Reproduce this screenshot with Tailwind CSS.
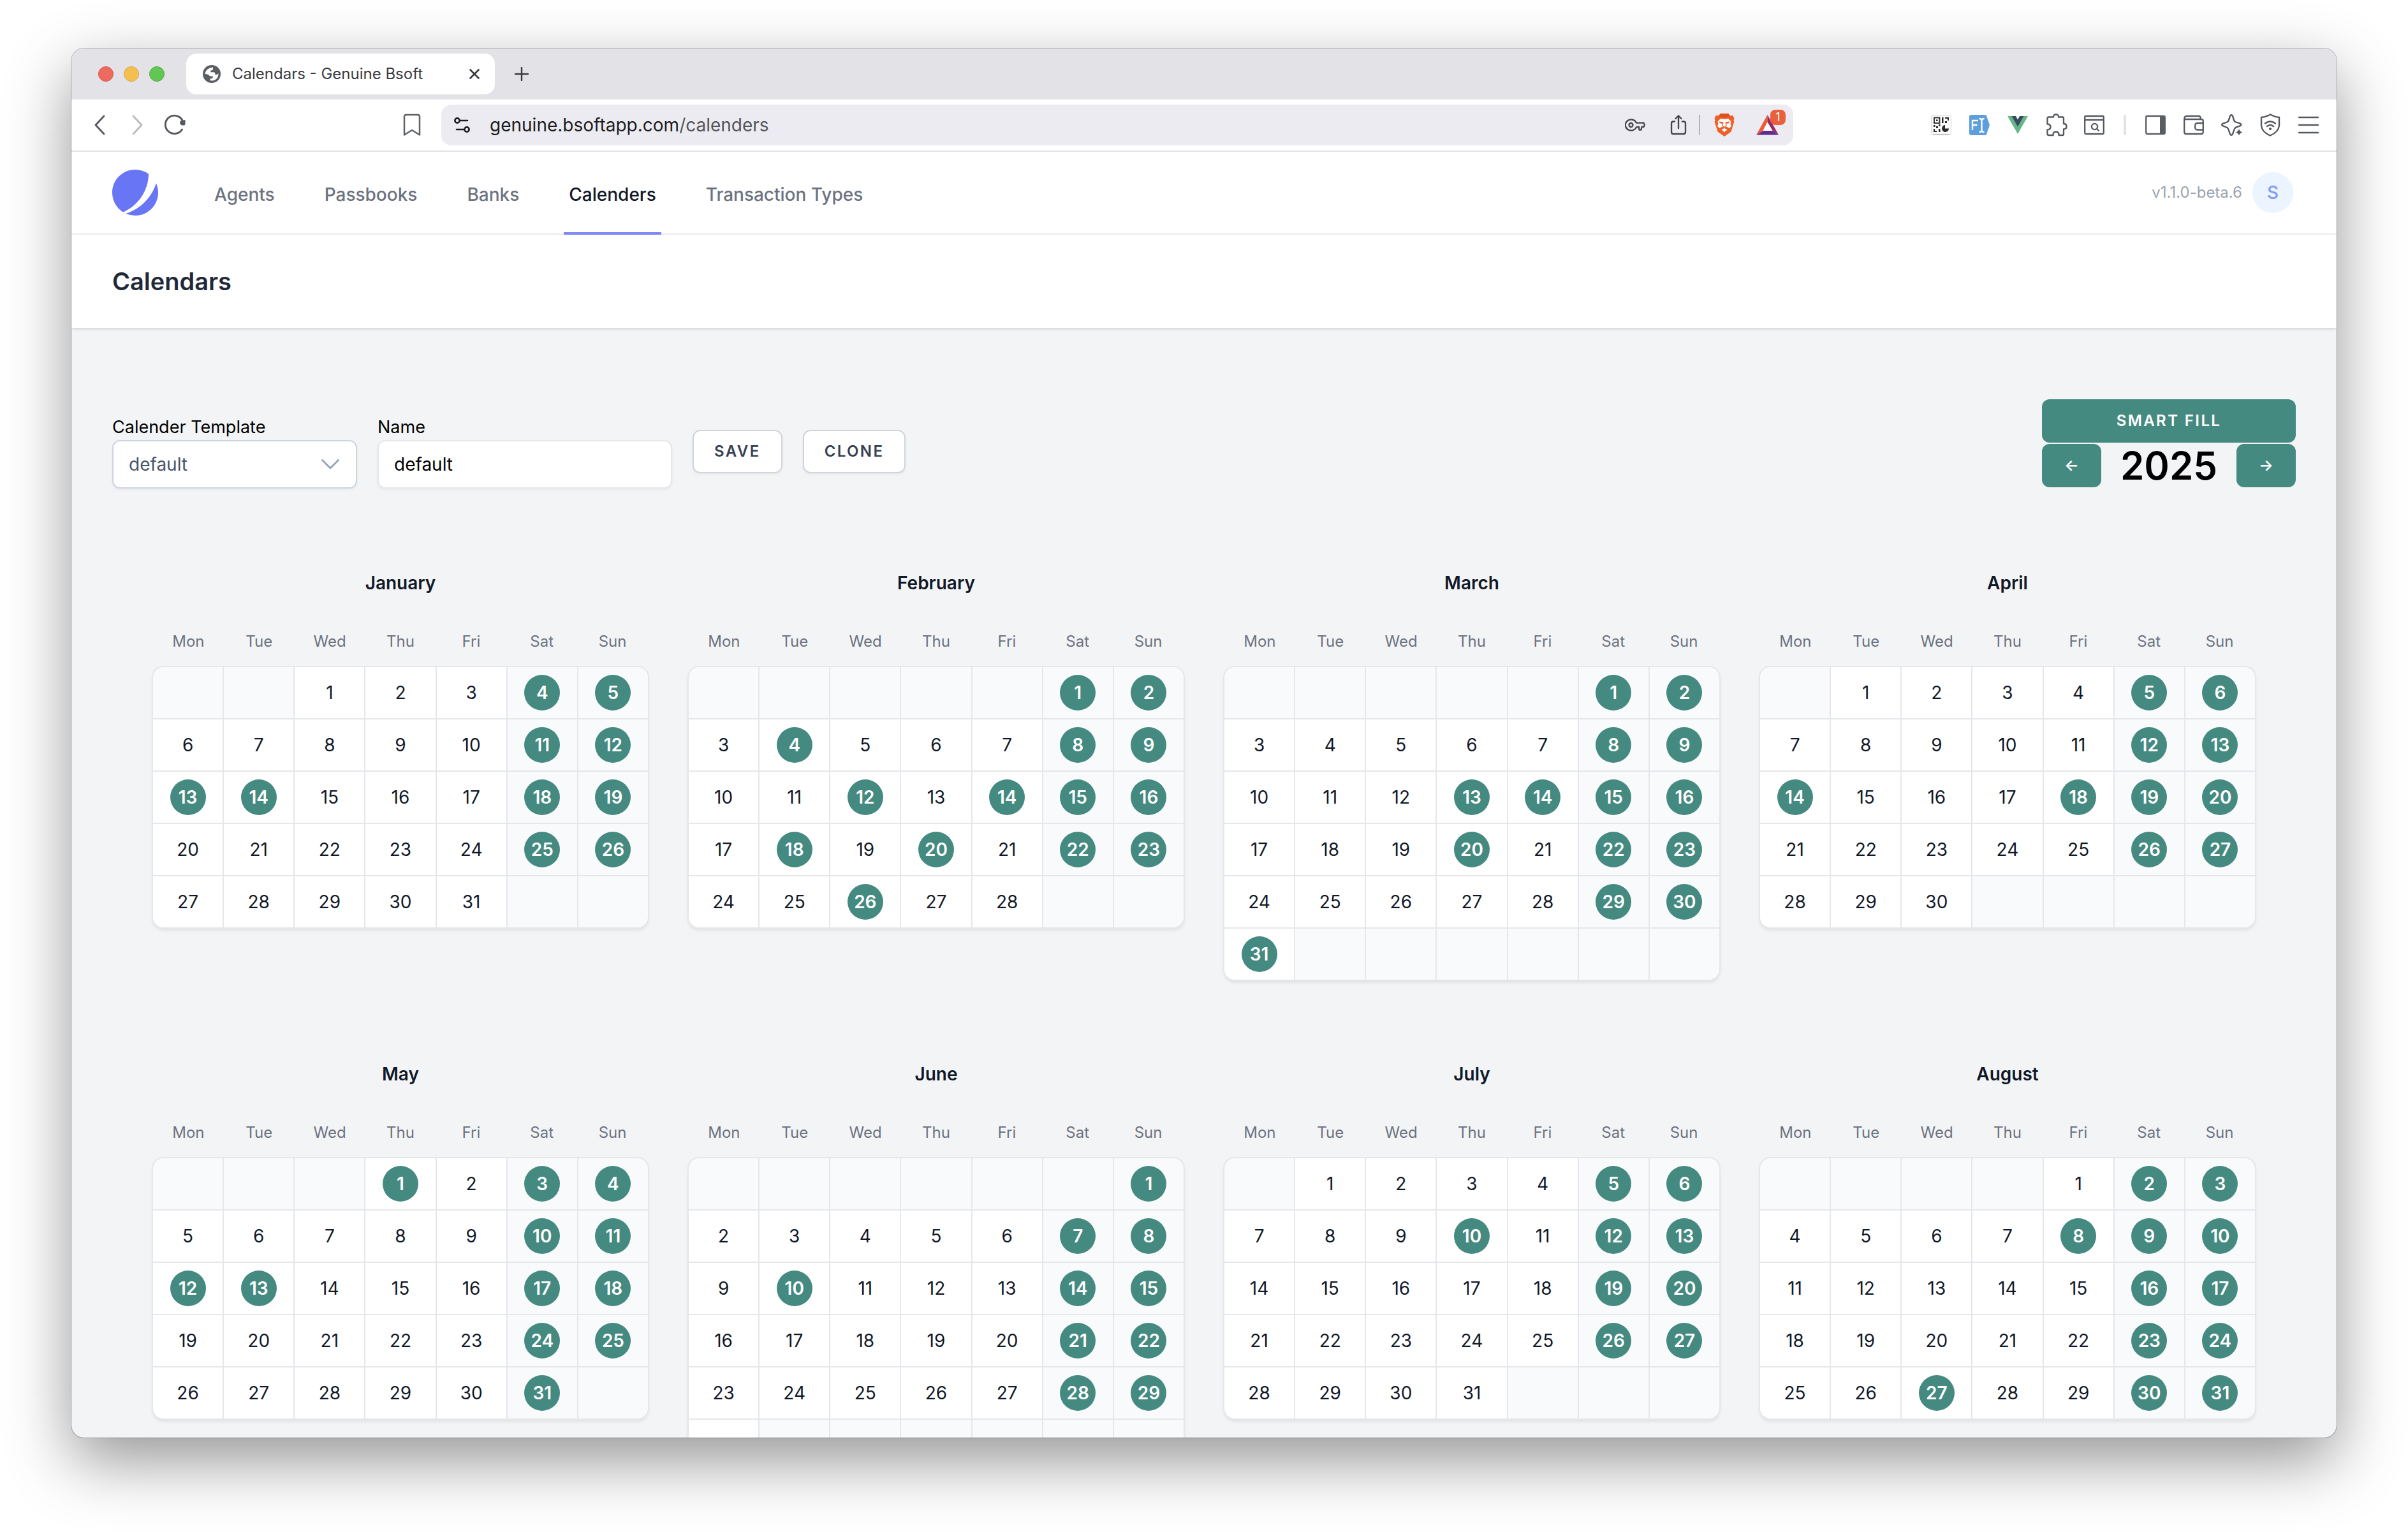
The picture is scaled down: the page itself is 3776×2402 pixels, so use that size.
<!DOCTYPE html>
<html lang="en">
<head>
<meta charset="utf-8">
<title>Calendars - Genuine Bsoft</title>
<script src="https://cdn.jsdelivr.net/npm/@tailwindcss/browser@4"></script>
</head>
<body class="bg-white font-['Inter',sans-serif] text-[28px] leading-10 text-black">
<div class="flex h-screen flex-col px-28 pt-[76px] pb-[148px]">
<div class="flex min-h-0 flex-1 flex-col overflow-hidden rounded-[20px] bg-[#f3f4f6] shadow-[0_0_0_1px_rgba(0,0,0,0.28),0_36px_100px_rgba(0,0,0,0.42)]">

  <!-- Tab strip -->
  <div class="flex h-20 shrink-0 items-center bg-[#e3e2e7] px-[42px]">
    <div class="flex gap-4">
      <span class="size-6 rounded-full border border-[#d9574c] bg-[#ed6a5f]"></span>
      <span class="size-6 rounded-full border border-[#dba53c] bg-[#f5bf4f]"></span>
      <span class="size-6 rounded-full border border-[#51ad42] bg-[#62c655]"></span>
    </div>
    <div class="ml-[34px] flex h-16 w-[484px] items-center rounded-2xl bg-white pr-5 pl-[26px]">
      <svg class="size-7" viewBox="0 0 28 28"><circle cx="14" cy="14" r="14" fill="#5a5d62"/><path d="M3.500 14Q4 5.500 16 3.600V6.200Q15.500 8.600 12.300 8.600V11.200H17.500Q19.500 11.500 19.500 15H21.500L24.800 13.500Q24 22.500 16 24.600L11.500 24.200V21.200H13.500Q16 21 15.800 17.600H11Q9.500 14 3.500 14z" fill="#fff"/></svg>
      <span class="ml-[18px] flex-1 text-2xl text-[#3b3b3f]">Calendars - Genuine Bsoft</span>
      <button aria-label="Close tab" class="flex size-6 items-center justify-center"><svg class="size-4" viewBox="0 0 16 16" stroke="#3b3b3f" stroke-width="2.600" stroke-linecap="round"><path d="M1.500 1.500l13 13M14.500 1.500l-13 13"/></svg></button>
    </div>
    <button aria-label="New tab" class="ml-[31px]"><svg class="size-[22px]" viewBox="0 0 22 22" stroke="#3b3b3f" stroke-width="2.400" stroke-linecap="round"><path d="M11 1v20M1 11h20"/></svg></button>
  </div>

  <!-- Address bar -->
  <div class="flex h-[82px] shrink-0 items-center border-b-2 border-[#e3e2e7] bg-white px-7">
    <button aria-label="Back" class="flex w-8 justify-center"><svg class="h-8 w-5" viewBox="0 0 20 32" fill="none" stroke="#55585e" stroke-width="2.800" stroke-linecap="round" stroke-linejoin="round"><path d="M17 2L4 16l13 14"/></svg></button>
    <button aria-label="Forward" class="ml-7 flex w-8 justify-center"><svg class="h-8 w-5" viewBox="0 0 20 32" fill="none" stroke="#babbbd" stroke-width="2.800" stroke-linecap="round" stroke-linejoin="round"><path d="M3 2l13 14L3 30"/></svg></button>
    <button aria-label="Reload" class="ml-6"><svg class="size-9" viewBox="0 0 36 36" fill="none"><path d="M29.500 25A14.200 14.200 0 1 1 31 13" stroke="#55585e" stroke-width="2.900" stroke-linecap="round"/><path d="M34.500 10v6.500q0 2-2 2h-3.500a4.500 4.500 0 0 1-2-7z" fill="#55585e"/></svg></button>
    <button aria-label="Bookmark" class="ml-[340px]"><svg class="h-9 w-7" viewBox="0 0 28 36" fill="none" stroke="#5f6368" stroke-width="2.500" stroke-linejoin="round"><path d="M2 33.500V5q0-3 3-3h18q3 0 3 3v28.500L14 26z"/></svg></button>
    <div class="mr-[216px] ml-8 flex h-16 flex-1 items-center rounded-2xl bg-[#ecebf1] pr-6 pl-5">
      <svg class="size-7" viewBox="0 0 28 28" fill="none" stroke="#1c1c20" stroke-width="2.600" stroke-linecap="round"><circle cx="5" cy="7" r="3.600"/><path d="M10 7h11"/><circle cx="20" cy="21" r="3.600"/><path d="M4 21h11"/></svg>
      <div role="textbox" aria-label="Address" class="ml-7 flex-1 text-[#1c1c20]">genuine.bsoftapp.com<span class="text-[#55555a]">/calenders</span></div>
      <button aria-label="Passwords"><svg class="size-8" viewBox="0 0 32 32" fill="none" stroke="#45464a" stroke-width="2.300" stroke-linejoin="round"><circle cx="9.500" cy="16" r="3"/><path d="M18 12.600A9 8.600 0 1 0 18 19.400l4-.4.500 4.500h3L26.500 19h3l1.500-3-1.500-3.400z"/></svg></button>
      <button aria-label="Share" class="ml-9"><svg class="h-9 w-8" viewBox="0 0 32 36" fill="none" stroke="#45464a" stroke-width="2.400" stroke-linecap="round" stroke-linejoin="round"><path d="M10 12.500H8q-3 0-3 3V29q0 3 3 3h16q3 0 3-3V15.500q0-3-3-3h-2M16 23V3.500M11.500 8L16 3.500 20.500 8"/></svg></button>
      <span class="mx-4 h-8 w-0.5 bg-[#b3b3ba]"></span>
      <button aria-label="Brave Shields" class="ml-1.5"><svg class="h-9 w-8" viewBox="0 0 32 36"><path d="M10 0h12l3 3.500 4-.5 2.500 4.500-1 3 .8 2.500-4.800 15.500L16 36 5.500 28.500.700 13l.8-2.500-1-3L3 3l4 .5z" fill="#ee5f29"/><path d="M10 0h12l3 3.500-3 2.500H10L7 3.500z" fill="#dc5320"/><path d="M10 8l6 1 6-1 4.500 4.500-1 4.500 1.500 2.500-3 3.500-5-2.500-3 1.500-3-1.500L8 23l-3-3.500L6.500 17l-1-4.500z" fill="#fff"/><path d="M8 12.500l6 .8-1.500 2.700-4-1zM24 12.500l-6 .8 1.500 2.700 4-1z" fill="#ee5f29"/><path d="M14 14l-1 5.500 3 2 3-2-1-5.500" fill="none" stroke="#ee5f29" stroke-width="1.300"/><path d="M16 23l4.500 2.300L16 29l-4.500-3.700z" fill="#fff"/></svg></button>
      <button aria-label="Brave Rewards" class="relative ml-9"><svg class="size-8 overflow-visible" viewBox="0 0 32 32"><path d="M15.500 0L-2 31.500 8.500 25 15.500 11.500z" fill="#f05a35"/><path d="M15.500 0v11.500L23.500 25l9.500 6.500z" fill="#962a62"/><path d="M-2 31.500L8.500 25h15l9.500 6.500z" fill="#5f2d91"/><path d="M15.500 11.500L23.500 25h-15z" fill="#fff"/></svg>
        <span class="absolute -top-2 left-5 flex size-6 items-center justify-center rounded-lg bg-[#e8603c] text-lg leading-6 text-white">1</span></button>
    </div>
    <div class="flex items-center gap-7">
      <button aria-label="QR code"><svg class="size-8" viewBox="0 0 32 32"><rect x=".5" y=".5" width="31" height="31" rx="3" fill="#fafafa" stroke="#d6d6d6"/><path d="M3 31h26" stroke="#c4c4c4" stroke-width="2"/><rect x="5" y="4.500" width="8.500" height="8.500" fill="none" stroke="#2b2b2b" stroke-width="1.800"/><path d="M8 7.500h2.600v2.600H8zM17 4h2.500v9H17zM22 4h6v5h-2V6h-4zM22 10h3v3h-3zM4 16h2.500v3H4zM8 18h3v3H8zM12 15h2.500v3H12zM4 22h2v3h3v2H4zM12 22h2.500v5H12z" fill="#2b2b2b"/><path d="M22 16v5.500h6A5.500 5.500 0 1 1 22 16z" fill="#2b2b2b"/></svg></button>
      <button aria-label="Form filler"><svg class="size-8" viewBox="0 0 32 32"><path d="M3 0h22q1.500 0 2 1.500L32 16l-5 14.500q-.5 1.500-2 1.500H3q-3 0-3-3V3q0-3 3-3z" fill="#5d9fdc"/><path d="M5 24V9h9M5 16h7.500M19.500 8v17M15.500 6q4 0 4 2.500 0-2.500 4-2.500M15.500 27q4 0 4-2.500 0 2.500 4 2.500" fill="none" stroke="#fff" stroke-width="2.400"/></svg></button>
      <button aria-label="Vue devtools"><svg class="size-8" viewBox="0 0 32 32"><path d="M0 2h8l8 14 8-14h8L16 30z" fill="#64b687"/><path d="M6.500 2H13l3 5.500L19 2h6.500L16 18.500z" fill="#384960"/></svg></button>
      <button aria-label="Extensions"><svg class="h-9 w-8 overflow-visible" viewBox="0 0 32 36" fill="none" stroke="#55585e" stroke-width="2.400" stroke-linejoin="round"><path d="M1.500 6.500q0-2 2-2H11q-.3-4 4-4t4 4h6q2 0 2 2V15q4.500 0 4.500 4.200T27 23.500V31q0 2-2 2h-5.500q.3-5.500-4.500-5.500T10.500 33h-7q-2 0-2-2v-6.500q5-.5 5-4.500t-5-4.500z" transform="translate(1 1)"/></svg></button>
      <button aria-label="Page search"><svg class="size-8" viewBox="0 0 32 32" fill="none" stroke="#55585e" stroke-width="2.300"><rect x="1.200" y="2" width="29.600" height="28" rx="2"/><path d="M1 8h30M19.500 21.500l4 4"/><circle cx="16.500" cy="18.500" r="4.600"/></svg></button>
      <span class="flex w-2 justify-center"><span class="h-8 w-1 rounded-full bg-[#e3e2e7]"></span></span>
      <button aria-label="Sidebar"><svg class="size-8" viewBox="0 0 32 32"><rect x="1.200" y="2" width="29.600" height="28" rx="2" fill="none" stroke="#5a5d62" stroke-width="2.300"/><path d="M23 2h8v28h-8z" fill="#5a5d62"/></svg></button>
      <button aria-label="Wallet"><svg class="size-8" viewBox="0 0 32 32" fill="none" stroke="#55585e" stroke-width="2.300" stroke-linejoin="round"><path d="M1.200 7V27q0 3 3 3h23.600q3 0 3-3V10q0-3-3-3H1.200q0-5 4-5H24q2.500 0 3 4M31 13h-9q-4 0-4 5.300t4 5.200h9"/></svg></button>
      <button aria-label="Assistant"><svg class="h-9 w-8 overflow-visible" viewBox="0 0 32 36"><path d="M13.500 3q1.500-1.500 3 0c2 3 1.500 8 4.500 10 3 1.500 6 1.500 8.500 3q1.500 1.500 0 3c-3 1.500-6 1.500-8.500 3.500-2.500 2.500-2.500 7.500-4.500 10.500q-1.500 1.500-3 0c-2-3-2-8-4.500-10.500-2.500-2-5-2-8-3.500q-1.500-1.500 0-3c3-1.500 5.500-1.500 8-3 3-2 2.500-7 4.500-10z" fill="none" stroke="#55585e" stroke-width="2.400" stroke-linejoin="round"/><path d="M27 22q.8 6.500 7 7.500-6.200.8-7 6.500-.8-5.700-7-6.500 6.200-1 7-7.500z" fill="#55585e" stroke="#fff"/></svg></button>
      <button aria-label="VPN"><svg class="h-9 w-8" viewBox="0 0 32 36" fill="none" stroke="#55585e" stroke-width="2.400" stroke-linejoin="round" stroke-linecap="round"><path d="M16 1.500Q23 5.500 30 6v13q-1 10-14 15.500Q3 29 2 19V6q7-.5 14-4.500z"/><path d="M8 15.500q8-6 16 0M11 20q5-3.800 10 0"/><circle cx="16" cy="24" r="1.600" fill="#55585e" stroke-width="1"/></svg></button>
      <button aria-label="Menu"><svg class="size-8" viewBox="0 0 32 32" stroke="#55585e" stroke-width="2.500" stroke-linecap="round"><path d="M1 4h30M1 16h30M1 28h30"/></svg></button>
    </div>
  </div>

  <!-- App navigation -->
  <nav class="flex h-[130px] shrink-0 items-stretch border-b-2 border-[#f0f0f2] bg-white pr-[68px] pl-16">
    <a href="#" aria-label="Home" class="flex items-center"><svg class="size-[72px]" viewBox="0 0 48 48"><path d="M11.395 44.428C4.557 40.198 0 32.632 0 24 0 10.745 10.745 0 24 0a23.891 23.891 0 0113.997 4.502c-.2 17.907-11.097 33.245-26.602 39.926z" fill="#6875F5"/><path d="M14.134 45.885A23.914 23.914 0 0024 48c13.255 0 24-10.745 24-24 0-3.516-.756-6.856-2.115-9.866-4.659 15.143-16.608 27.092-31.750 31.751z" fill="#6875F5"/></svg></a>
    <div class="-mb-0.5 ml-20 flex gap-[62px] font-medium text-[#6b7280]">
      <a href="#" class="flex items-center border-b-4 border-transparent px-2 pt-2">Agents</a>
      <a href="#" class="flex items-center border-b-4 border-transparent px-2 pt-2">Passbooks</a>
      <a href="#" class="flex items-center border-b-4 border-transparent px-2 pt-2">Banks</a>
      <a href="#" class="flex items-center border-b-4 border-[#818cf8] px-2 pt-2 text-[#111827]">Calenders</a>
      <a href="#" class="flex items-center border-b-4 border-transparent px-2 pt-2">Transaction Types</a>
    </div>
    <div class="ml-auto flex items-center gap-4">
      <span class="text-2xl text-[#9ca3af]">v1.1.0-beta.6</span>
      <button class="flex size-16 items-center justify-center rounded-full bg-[#ebf4ff] text-[28px] font-medium text-[#7f9cf5]">S</button>
    </div>
  </nav>

  <header class="relative shrink-0 bg-white px-16 py-12 shadow-[0_2px_6px_rgba(0,0,0,0.1),0_2px_4px_-2px_rgba(0,0,0,0.1)]">
    <h1 class="text-[38px] leading-[50px] font-semibold text-[#1f2937]">Calendars</h1>
  </header>

  <main class="min-h-0 flex-1 overflow-hidden px-16 pt-28">
    <div class="flex items-end justify-between">
      <form class="flex items-center gap-8">
        <div class="w-96">
          <label for="template" class="block text-[27px]">Calender Template</label>
          <div class="relative">
            <select id="template" class="block h-[76px] w-full appearance-none rounded-xl border-2 border-[#cbd5e1] bg-white px-6 text-[#475569] shadow-[0_2px_4px_rgba(0,0,0,0.05)]"><option>default</option></select>
            <svg class="pointer-events-none absolute top-[30px] right-7 h-4 w-7" viewBox="0 0 28 16" fill="none" stroke="#94a3b8" stroke-width="2.800" stroke-linecap="round" stroke-linejoin="round"><path d="M1.500 1.500L14 14 26.500 1.500"/></svg>
          </div>
        </div>
        <div class="w-[462px]">
          <label for="name" class="block text-[27px]">Name</label>
          <input id="name" type="text" value="default" class="block h-[76px] w-full rounded-xl border-2 border-[#e5e7eb] bg-white px-6 shadow-[0_2px_4px_rgba(0,0,0,0.05)]">
        </div>
        <button type="button" class="h-[68px] rounded-xl border-2 border-[#d1d5db] bg-white px-8 text-2xl font-semibold tracking-widest text-[#374151] shadow-[0_2px_4px_rgba(0,0,0,0.05)]">SAVE</button>
        <button type="button" class="h-[68px] rounded-xl border-2 border-[#d1d5db] bg-white px-8 text-2xl font-semibold tracking-widest text-[#374151] shadow-[0_2px_4px_rgba(0,0,0,0.05)]">CLONE</button>
      </form>
      <div class="w-[398px]">
        <button class="block h-[68px] w-full rounded-xl bg-[#458a80] text-2xl font-semibold tracking-widest text-white">SMART FILL</button>
        <div class="flex h-[72px] items-center justify-between">
          <button aria-label="Previous year" class="h-[68px] w-[93px] rounded-xl bg-[#458a80] text-2xl font-semibold text-white">←</button>
          <span class="text-6xl font-semibold">2025</span>
          <button aria-label="Next year" class="h-[68px] w-[93px] rounded-xl bg-[#458a80] text-2xl font-semibold text-white">→</button>
        </div>
      </div>
    </div>
    <div id="months" class="grid grid-cols-4 gap-x-16 gap-y-32 px-16 pt-32"></div>
  </main>
</div>
</div>
<script>
const YEAR = 2025;
const holidays = {
  January: [4,5,11,12,13,14,18,19,25,26],
  February: [1,2,4,8,9,12,14,15,16,18,20,22,23,26],
  March: [1,2,8,9,13,14,15,16,20,22,23,29,30,31],
  April: [5,6,12,13,14,18,19,20,26,27],
  May: [1,3,4,10,11,12,13,17,18,24,25,31],
  June: [1,7,8,10,14,15,21,22,28,29],
  July: [5,6,10,12,13,19,20,26,27],
  August: [2,3,8,9,10,16,17,23,24,27,30,31]
};
const weekdays = ['Mon','Tue','Wed','Thu','Fri','Sat','Sun'];
document.getElementById('months').innerHTML = Object.keys(holidays).map((name, m) => {
  const lead = (new Date(YEAR, m, 1).getDay() + 6) % 7;
  const days = new Date(YEAR, m + 1, 0).getDate();
  const total = Math.ceil((lead + days) / 7) * 7;
  let cells = '';
  for (let i = 0; i < total; i++) {
    const d = i - lead + 1;
    if (d < 1 || d > days) { cells += '<span class="h-20 bg-[#f9fafb]"></span>'; continue; }
    const bg = i % 7 > 4 ? 'bg-[#f9fafb]' : 'bg-white';
    const on = holidays[name].includes(d);
    cells += `<button class="flex h-20 items-center justify-center ${bg}"><time datetime="${YEAR}-${String(m + 1).padStart(2, '0')}-${String(d).padStart(2, '0')}" class="flex size-14 items-center justify-center rounded-full ${on ? 'bg-[#458a80] font-semibold text-white' : 'text-[#111827]'}">${d}</time></button>`;
  }
  return `<section class="text-center">
    <h2 class="font-semibold text-[#111827]">${name}</h2>
    <div class="mt-12 grid grid-cols-7 text-2xl text-[#6b7280]">${weekdays.map(w => `<div class="leading-[48px]">${w}</div>`).join('')}</div>
    <div class="mt-4 grid grid-cols-7 gap-0.5 overflow-hidden rounded-2xl bg-[#e5e7eb] shadow-[0_0_0_2px_#e5e7eb,0_4px_6px_rgba(0,0,0,0.1)]">${cells}</div>
  </section>`;
}).join('');
</script>
</body>
</html>
